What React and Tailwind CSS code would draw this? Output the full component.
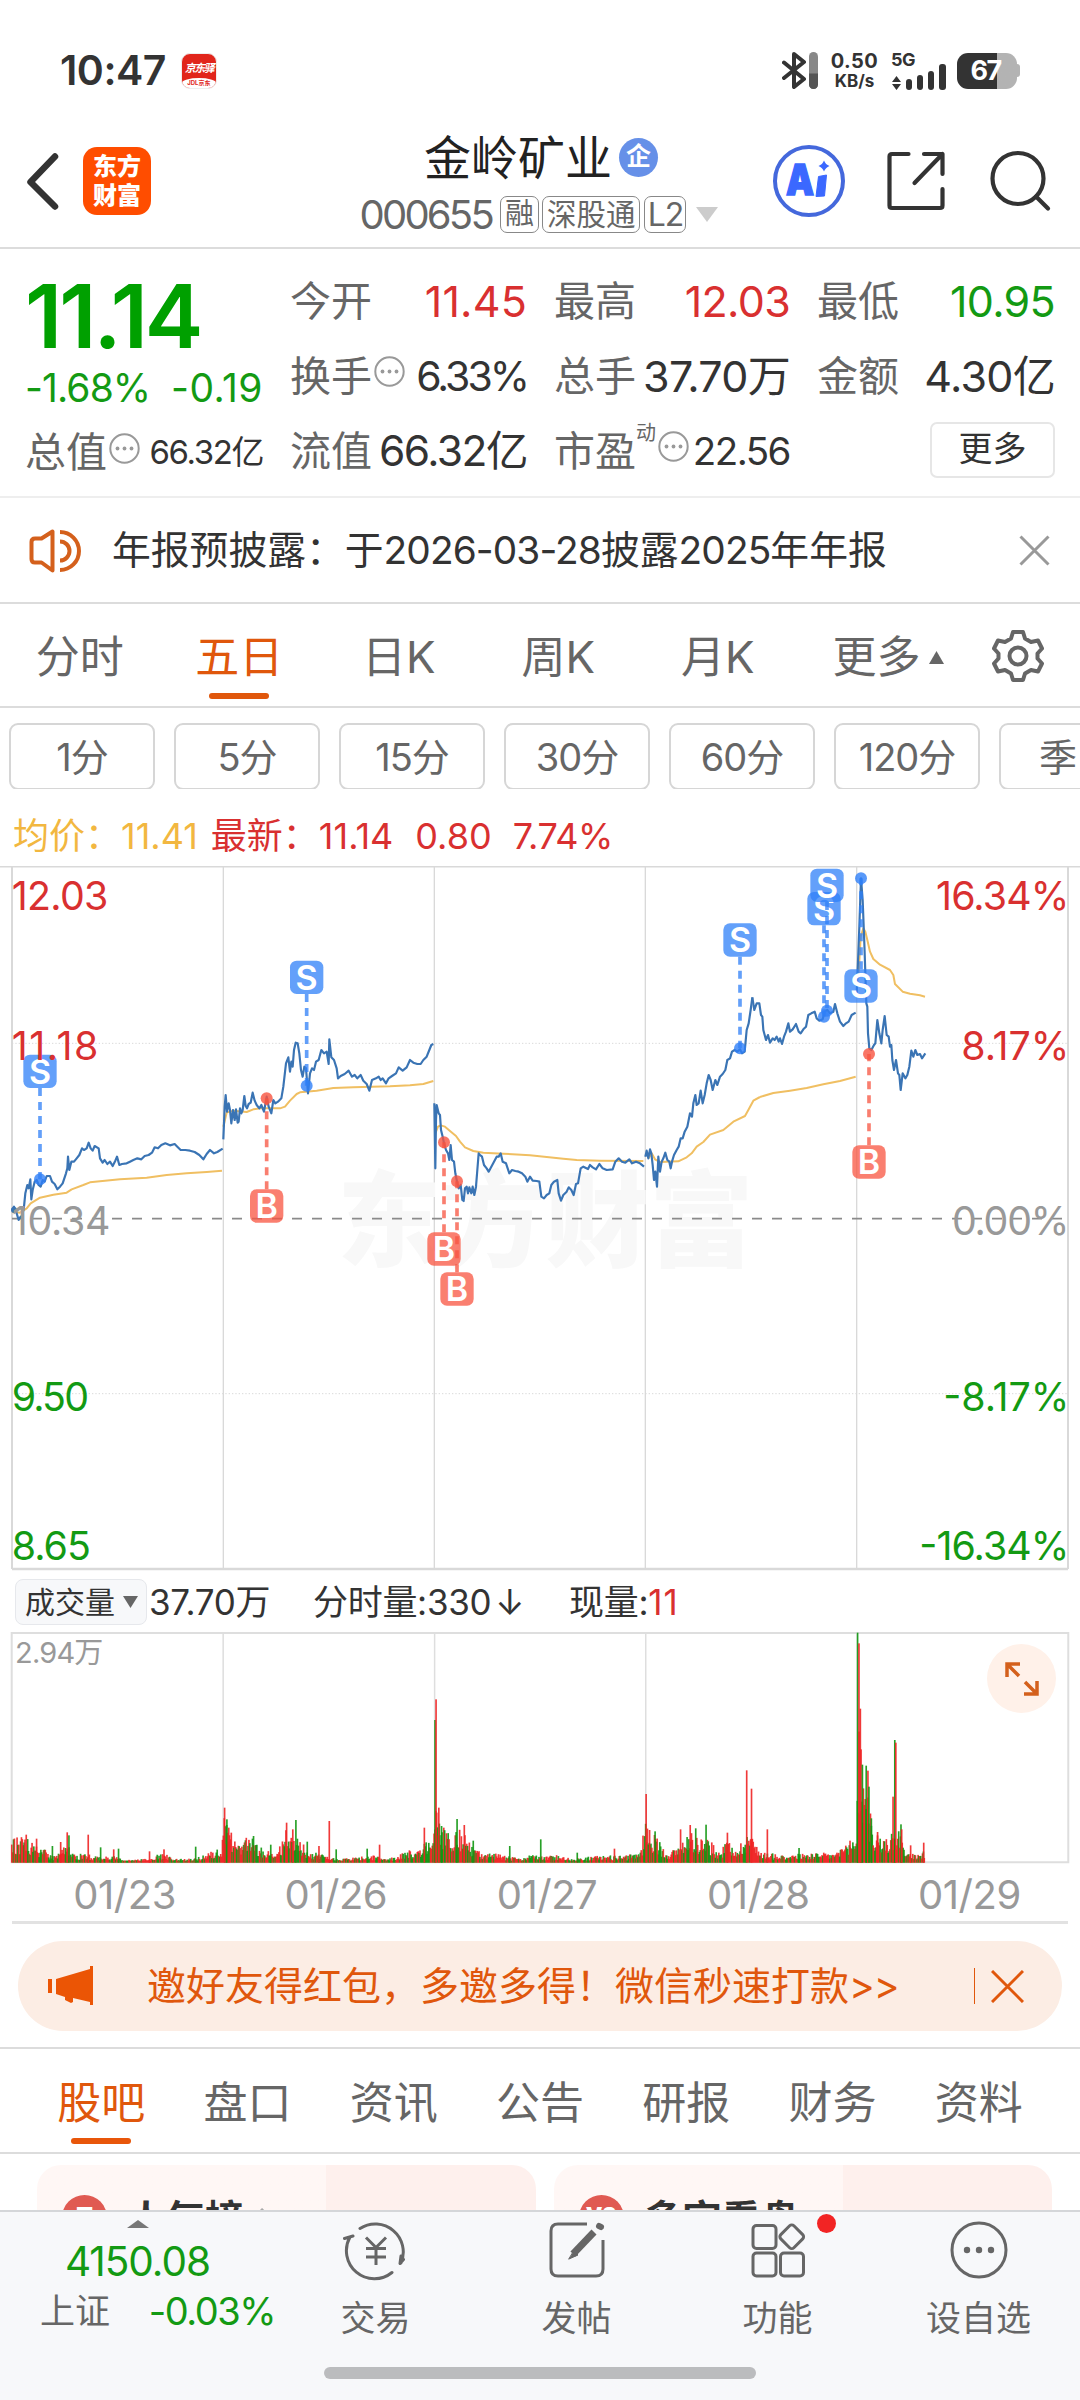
import React, { useState } from 'react';

const FONT = "font-['Inter','Noto_Sans_CJK_SC',sans-serif]";

const PERIODS = ['分时', '五日', '日K', '周K', '月K'];
const MINUTES = ['1分', '5分', '15分', '30分', '60分', '120分'];
const SECTIONS = ['股吧', '盘口', '资讯', '公告', '研报', '财务', '资料'];
const DATES = ['01/23', '01/26', '01/27', '01/28', '01/29'];

// Intraday lines, three units to a pixel; every segment has its own origin
const SEGMENTS = [
  {
    at: [0, 0],
    price: '36,1050 42,1040 50,1060 56,1080 62,1070 66,1072 72,1040 76,1000 82,975 86,985 91,958 94,1018 98,990 104,965 110,960 116,975 122,980 128,960 134,965 140,948 150,948 156,965 164,972 172,988 180,980 188,970 198,940 202,925 204,890 208,930 214,905 222,905 230,895 238,885 246,865 252,870 260,865 266,848 272,865 278,872 284,858 296,865 300,895 308,908 314,900 322,912 330,905 338,918 346,902 351,890 358,915 366,912 380,910 390,905 400,900 412,895 424,898 434,888 446,885 456,878 464,862 474,865 484,855 496,850 510,856 524,852 532,860 542,870 556,870 570,872 584,876 598,885 610,898 620,882 630,870 642,880 652,876 668,866',
    avg: '36,1055 60,1058 80,1045 92,1030 120,1013 160,1004 200,998 215,988 250,975 270,967 300,964 360,958 440,953 500,945 560,940 620,936 666,932',
  },
  {
    at: [0, 0],
    price: '670,838 674,740 677,705 681,755 686,730 690,750 694,790 699,750 704,780 708,748 713,788 716,785 720,745 724,760 728,750 733,708 737,738 741,745 746,732 752,728 758,698 764,722 770,735 778,745 784,735 792,755 800,710 806,740 814,760 820,720 826,730 834,725 844,715 850,680 858,610 865,592 870,635 874,605 878,620 882,570 887,548 893,550 898,580 903,630 908,650 913,620 918,625 924,700 930,640 936,625 942,630 948,605 956,600 964,570 972,580 980,575 986,612 988,538 994,592 1002,600 1010,625 1014,655 1022,648 1034,642 1046,632 1056,650 1064,645 1072,655 1082,645 1090,662 1100,672 1108,692 1116,660 1128,655 1136,650 1142,660 1148,655 1158,670 1166,655 1176,648 1188,640 1196,622 1208,632 1220,622 1230,600 1240,608 1252,612 1262,612 1270,600 1280,590 1288,570 1294,555 1300,552',
    avg: '670,800 680,758 700,752 740,756 760,748 780,745 840,745 855,740 870,722 890,702 900,697 950,692 1000,684 1060,682 1170,679 1230,676 1270,672 1300,663',
  },
  {
    at: [1290, 360],
    price: '13,370 16,565 18,420 20,375 26,400 30,405 33,450 38,470 42,490 48,510 54,520 58,540 62,495 66,540 72,545 76,580 82,610 86,625 92,615 97,660 101,663 105,625 110,620 114,640 118,622 124,640 128,620 133,645 138,620 142,570 146,520 150,525 156,530 162,555 170,565 176,575 184,560 192,545 200,530 206,530 212,520 218,545 228,550 238,580 246,570 256,573 266,575 276,580 286,590 292,605 300,590 308,602 320,603 328,605 334,650 342,655 350,645 358,640 364,615 372,605 382,600 386,640 393,662 400,645 410,635 416,622 424,630 431,645 438,612 444,610 452,565 460,560 474,567 480,555 488,562 498,568 508,552 518,565 530,570 548,568 556,545 566,535 576,545 586,548 598,538 606,550 618,545 630,550 642,560',
    avg: '16,460 24,440 32,436 45,440 60,453 78,468 90,485 105,502 130,513 160,518 220,521 300,526 350,531 400,536 440,540 510,542 640,543',
  },
  {
    at: [1290, 360],
    price: '646,530 650,512 655,535 660,508 664,520 668,555 672,600 676,575 681,620 685,530 690,575 695,545 700,535 706,518 712,540 718,545 722,565 726,545 732,525 740,510 746,500 752,475 758,475 764,455 772,440 780,400 786,410 790,370 796,345 800,375 806,370 812,332 818,370 824,345 830,310 836,285 842,300 848,330 856,300 862,315 870,290 878,282 886,270 892,240 900,235 906,215 914,210 922,215 930,208 936,220 944,215 950,150 956,130 962,90 967,52',
    avg: '655,535 665,520 675,538 690,546 745,544 770,532 785,520 800,500 820,486 840,464 880,450 910,425 945,408 955,390 970,362 990,351',
  },
  {
    at: [2220, 0],
    price: '37,412 43,450 50,430 58,430 63,465 67,470 70,510 78,540 84,525 90,548 98,535 104,540 110,530 116,545 120,535 126,552 132,530 138,515 145,490 150,515 158,508 168,492 176,515 182,520 190,508 198,500 205,465 214,460 224,455 230,475 238,482 248,478 254,455 262,450 270,460 280,455 285,432 292,460 300,485 310,498 318,490 326,485 335,465 347,458',
    avg: '60,711 100,699 150,692 200,684 250,673 300,663 347,650',
  },
  {
    at: [2220, 0],
    price: '350,400 353,330 358,200 363,55 368,120 373,250 379,430 382,440 384,520 388,565 394,570 402,555 406,550 412,480 418,520 424,550 428,510 434,468 440,525 446,530 450,560 454,555 457,600 462,630 468,600 474,640 478,645 482,690 488,640 496,655 502,645 508,620 514,572 520,590 526,570 532,585 540,582 546,595 556,580',
    avg: '356,340 362,230 370,205 376,215 382,240 390,275 400,297 420,314 450,330 460,345 465,372 488,395 510,401 540,406 555,410',
  },
];

// x, y of the deal on the line, y of its badge
const DEALS = [
  { side: 'S', x: 120, y: 958, box: 634 },
  { side: 'S', x: 920, y: 677, box: 352 },
  { side: 'B', x: 800, y: 715, box: 1038 },
  { side: 'B', x: 1332, y: 847, box: 1167 },
  { side: 'B', x: 1371, y: 964, box: 1287 },
  { side: 'S', x: 2220, y: 565, box: 240 },
  { side: 'S', x: 2472, y: 470, box: 146 },
  { side: 'S', x: 2481, y: 452, box: 76 },
  { side: 'S', x: 2583, y: 55, box: 378 },
  { side: 'B', x: 2607, y: 582, box: 906 },
];

// [x, height] pairs the ordinary volume bars stay under
const ENVELOPE = [
  [17, 75], [40, 80], [60, 50], [80, 20], [97, 55], [110, 25], [128, 30], [135, 20], [150, 18], [165, 20], [180, 8], [200, 10],
  [217, 20], [238, 30], [250, 12], [270, 12], [285, 15], [300, 28], [322, 50], [326, 150], [335, 100], [345, 50], [358, 80], [370, 70],
  [385, 30], [393, 40], [400, 25], [412, 90], [418, 105], [427, 80], [440, 60], [450, 30], [465, 30], [480, 15], [500, 12], [520, 18],
  [540, 22], [560, 14], [580, 25], [595, 40], [605, 30], [616, 80], [628, 70], [634, 180], [645, 100], [655, 90], [664, 110], [674, 90],
  [685, 50], [700, 30], [720, 30], [750, 14], [770, 25], [790, 18], [810, 25], [830, 12], [870, 22], [910, 22], [930, 35],
  [938, 150], [943, 100], [955, 75], [970, 30], [985, 50], [1003, 105], [1012, 80], [1028, 75], [1045, 30], [1058, 80], [1070, 40],
  [1085, 100], [1092, 90], [1100, 40], [1120, 30], [1140, 25], [1180, 30], [1210, 30], [1235, 60], [1243, 110], [1247, 430], [1251, 290],
  [1258, 250], [1265, 130], [1275, 80], [1285, 70], [1296, 100], [1308, 100], [1313, 30], [1330, 25], [1341, 40],
];
const SPIKES = [
  [38, 84, 'r'], [53, 72, 'r'], [76, 50, 'g'], [88, 62, 'r'], [97.5, 91, 'r'], [100, 82, 'g'], [128, 84, 'r'], [146, 46, 'g'], [165, 40, 'r'],
  [172, 42, 'g'], [217, 34, 'r'], [238, 40, 'r'], [284, 48, 'g'], [326, 165, 'r'], [329, 113, 'g'], [332, 105, 'r'], [368, 80, 'g'],
  [393, 54, 'g'], [416, 120, 'r'], [425, 100, 'r'], [429.5, 128, 'g'], [446, 63, 'g'], [463, 50, 'r'], [478, 125, 'r'], [488, 40, 'g'],
  [533, 42, 'g'], [551, 54, 'r'], [616, 105, 'r'], [631.5, 428, 'g'], [633, 490, 'r'], [637, 165, 'r'], [641, 110, 'g'], [663.5, 131, 'g'],
  [674, 113, 'r'], [687, 66, 'g'], [740, 50, 'g'], [785, 70, 'g'], [838, 30, 'g'], [892, 42, 'r'], [938, 206, 'r'], [943, 98, 'r'],
  [951, 94, 'g'], [988, 100, 'r'], [1002, 113, 'r'], [1010, 103, 'g'], [1025, 114, 'g'], [1056, 90, 'r'], [1084, 277, 'r'],
  [1091, 222, 'r'], [1114, 100, 'r'], [1160, 44, 'g'], [1234, 66, 'r'], [1245, 690, 'g'], [1247, 658, 'r'], [1249, 462, 'r'],
  [1250, 340, 'r'], [1252, 294, 'g'], [1257.5, 291, 'g'], [1260, 276, 'r'], [1261.5, 228, 'g'], [1265, 133, 'g'], [1274, 92, 'r'],
  [1296.5, 198, 'r'], [1299, 368, 'g'], [1300.5, 360, 'r'], [1308, 115, 'g'], [1309, 100, 'r'], [1322, 52, 'r'], [1341, 60, 'r'],
];

function buildBars() {
  let seed = 20260129;
  const rand = () => {
    seed = (seed * 1103515245 + 12345) % 2147483648;
    return seed / 2147483648;
  };
  const bars = [];
  let k = 0;
  for (let x = 17; x < 1343; x += 1.28) {
    while (k < ENVELOPE.length - 2 && ENVELOPE[k + 1][0] < x) k++;
    const [x0, h0] = ENVELOPE[k];
    const [x1, h1] = ENVELOPE[k + 1];
    const t = Math.min(1, Math.max(0, (x - x0) / (x1 - x0)));
    const h = (h0 + (h1 - h0) * t) * (0.3 + 0.7 * rand());
    bars.push([x, Math.max(6, h), rand() > 0.42 ? 'r' : 'g']);
  }
  return [...bars, ...SPIKES];
}
const BARS = buildBars();

function Info() {
  return (
    <svg className="ml-[2px] -mt-[9px] w-[31px] h-[31px] shrink-0" viewBox="0 0 31 31" fill="none" stroke="#999">
      <circle cx="15.5" cy="15.5" r="14.2" strokeWidth="2" />
      <g fill="#999" stroke="none">
        <circle cx="8.5" cy="15.5" r="1.9" />
        <circle cx="15.5" cy="15.5" r="1.9" />
        <circle cx="22.5" cy="15.5" r="1.9" />
      </g>
    </svg>
  );
}

function StatusBar() {
  return (
    <div className="h-[120px] pt-[22px] flex items-center pl-[60px] pr-[60px] text-[#333]">
      <span className="text-[41px] leading-none font-semibold tracking-[-0.5px]">10:47</span>
      <div className="ml-[15px] w-[36px] h-[36px] rounded-[9px] bg-[#e1251b] overflow-hidden border border-[#eee] flex flex-col items-center justify-between">
        <span className="mt-[9px] text-[11px] leading-none font-bold italic text-white whitespace-nowrap tracking-[-1.500px]">京东驿</span>
        <span className="w-full h-[10px] bg-white rounded-t-[50%] text-[6px] leading-[10px] font-bold text-center text-[#e1251b]">JDL京东</span>
      </div>
      <div className="ml-auto flex items-center">
        <svg className="w-[36px] h-[37px]" viewBox="0 0 36 37" fill="none" stroke="#333" strokeWidth="4" strokeLinecap="round" strokeLinejoin="round">
          <path d="M2 10.500 22 27 12 35V2L22 10 2 26" />
          <rect x="27" y="0" width="9" height="37" rx="4.500" fill="#888" stroke="none" />
          <path d="M27 21.500h9v11a4.500 4.500 0 0 1-9 0z" fill="#555" stroke="none" />
        </svg>
        <div className="ml-[11px] w-[51px] flex flex-col items-center font-bold">
          <span className="text-[20px] leading-[20px] tracking-[0.500px]">0.50</span>
          <span className="text-[17px] leading-[20px]">KB/s</span>
        </div>
        <div className="ml-[11px] w-[56px] flex flex-col">
          <span className="text-[18px] leading-[16px] font-bold -mb-[4px] tracking-[-0.5px]">5G</span>
          <svg className="w-[56px] h-[26px]" viewBox="0 0 56 26" fill="#333">
            <path d="M5.500 12 10 18H1zM5.500 26 10 20H1z" />
            <rect x="15" y="15" width="6" height="11" rx="3" />
            <rect x="26" y="11" width="6" height="15" rx="3" />
            <rect x="37" y="7" width="6" height="19" rx="3" />
            <rect x="48" y="0" width="7" height="26" rx="3" />
          </svg>
        </div>
        <div className="ml-[10px] flex items-center">
          <div className="w-[60px] h-[36px] rounded-[11px] bg-linear-to-r from-[#333] from-66% to-[#b3b3b3] to-66% flex items-center justify-center">
            <span className="text-white font-bold text-[27px] leading-none tracking-[-1.500px] mr-[3px]">67</span>
          </div>
          <div className="w-[3px] h-[13px] bg-[#b3b3b3] rounded-r-sm" />
        </div>
      </div>
    </div>
  );
}

function Header() {
  return (
    <div className="h-[129px] border-b-2 border-[#dcdcdc] flex items-center pb-[5px]">
      <svg className="ml-[25px] w-[36px] h-[60px] shrink-0" viewBox="0 0 36 60" fill="none" stroke="#333" strokeWidth="6.500" strokeLinecap="round" strokeLinejoin="round">
        <path d="M30 5.500 5.500 31 30 55.500" />
      </svg>
      <div className="ml-[22px] w-[68px] h-[68px] shrink-0 rounded-[14px] bg-[#ff4d00] text-white text-[24px] leading-[29px] font-black flex flex-col items-center justify-center">
        <span>东方</span>
        <span>财富</span>
      </div>
      <div className="ml-[206px] w-[364px] pt-[8px] shrink-0 flex flex-col items-center">
        <div className="flex items-center h-[60px] ml-[4px]">
          <span className="text-[47px] leading-none text-[#222]">金岭矿业</span>
          <span className="ml-[7px] w-[39px] h-[39px] rounded-full bg-[#6690e8] text-white text-[25px] leading-[37px] font-bold text-center">企</span>
        </div>
        <div className="flex items-center h-[54px] text-[#666] whitespace-nowrap">
          <span className="text-[40px] leading-none tracking-[-2.800px]">000655</span>
          <span className="ml-[8px] h-[37px] px-[4px] border border-[#888] rounded-[7px] text-[29px] leading-[34px]">融</span>
          <span className="ml-[3px] h-[37px] px-[4px] border border-[#888] rounded-[7px] text-[29.500px] leading-[34px]">深股通</span>
          <span className="ml-[4px] w-[42px] text-center h-[37px] border border-[#888] rounded-[7px] text-[32px] leading-[36px] tracking-[-1px]">L2</span>
          <svg className="ml-[10px] w-[22px] h-[15px]" viewBox="0 0 22 15" fill="#ccc">
            <path d="M0 0h22L11 15z" />
          </svg>
        </div>
      </div>
      <svg className="ml-[51px] w-[74px] h-[74px] shrink-0" viewBox="0 0 74 74">
        <circle cx="37" cy="37" r="34" fill="none" stroke="#4468dc" strokeWidth="4" />
        <text x="14" y="51" fontSize="42" fontWeight="900" fill="#3b68ff" stroke="#3b68ff" strokeWidth="1.500" textLength="28" lengthAdjust="spacingAndGlyphs">A</text>
        <path d="M46.500 32.500 54.500 31 52.500 52 44 52.500z" fill="#3b68ff" stroke="#3b68ff" strokeLinejoin="round" />
        <path d="M52 16.500q1.500 4 5.500 5.500-4 1.500-5.500 5.500-1.500-4-5.500-5.500 4-1.500 5.500-5.500z" fill="#3b68ff" />
      </svg>
      <svg className="ml-[40px] w-[62px] h-[62px] shrink-0" viewBox="0 0 62 62" fill="none" stroke="#333" strokeWidth="4.200" strokeLinecap="round" strokeLinejoin="round">
        <path d="M22.500 4H6Q3.500 4 3.500 6.500V55.500Q3.500 58 6 58H54Q56.500 58 56.500 55.500V39M38 4H56.500V24M56.500 4 28.500 33" />
      </svg>
      <svg className="ml-[41px] w-[62px] h-[62px] shrink-0" viewBox="0 0 62 62" fill="none" stroke="#333" strokeWidth="4.200" strokeLinecap="round">
        <circle cx="29" cy="28.500" r="25.500" />
        <path d="M47 46.500 59 58.500" />
      </svg>
    </div>
  );
}

function Stat({ label, value, color = 'text-[#333]', size = 'text-[43px] tracking-[-0.700px]', info, sup }) {
  return (
    <div className="flex items-center justify-between h-[75px]">
      <span className="flex items-center text-[41px] leading-none text-[#666] whitespace-nowrap">
        {label}
        {sup && <span className="text-[20px] self-start -mt-[8px]">{sup}</span>}
        {info && <Info />}
      </span>
      <span className={`leading-none whitespace-nowrap ${size} ${color}`}>{value}</span>
    </div>
  );
}

function Quote() {
  return (
    <div className="h-[249px] border-b-2 border-[#eee] pl-[25px] pt-[15px] grid grid-cols-[238px_237px_236px_238px] gap-x-[27px]">
      <div>
        <div className="h-[93px] pt-[7px] text-[88px] leading-[90px] font-semibold text-[#00a000] tracking-[-3px]">11.14</div>
        <div className="h-[62px] flex items-center justify-between text-[39px] leading-none text-[#139a13] tracking-[-0.900px]">
          <span>-1.68%</span>
          <span className="tracking-[0.500px]">-0.19</span>
        </div>
        <div className="h-[68px] flex items-center justify-between">
          <span className="flex items-center text-[41px] leading-none text-[#666]">总值<Info /></span>
          <span className="text-[33px] leading-none text-[#333] tracking-[-1.400px]">66.32亿</span>
        </div>
      </div>
      <div>
        <Stat label="今开" value="11.45" color="text-[#d93030]" size="text-[43px] tracking-[0.200px]" />
        <Stat label="换手" value="6.33%" size="text-[41px] tracking-[-3px]" info />
        <Stat label="流值" value="66.32亿" size="text-[42.500px] tracking-[-1.500px]" />
      </div>
      <div>
        <Stat label="最高" value="12.03" color="text-[#d93030]" />
        <Stat label="总手" value="37.70万" />
        <Stat label="市盈" value="22.56" size="text-[38.500px] tracking-[-1.500px]" sup="动" info />
      </div>
      <div>
        <Stat label="最低" value="10.95" color="text-[#139a13]" />
        <Stat label="金额" value="4.30亿" />
        <div className="h-[73px] flex items-center justify-end">
          <button className="w-[125px] h-[56px] border-2 border-[#e6e6e6] rounded-[7px] text-[34px] leading-none text-[#333] pb-[2px]">更多</button>
        </div>
      </div>
    </div>
  );
}

function Notice({ onClose }) {
  return (
    <div className="h-[106px] border-b-2 border-[#dcdcdc] flex items-center pt-[2px] pl-[28px] pr-[30px]">
      <svg className="w-[54px] h-[46px] shrink-0" viewBox="0 0 54 46" fill="none" stroke="#d4601c" strokeWidth="4" strokeLinejoin="round">
        <path d="M24.500 3.500V42.500L13.500 34.500H7Q3.500 34.500 3.500 31V14Q3.500 10.500 7 10.500H13.500z" />
        <path d="M32 4a19 19 0 0 1 0 38M32 13.500a9.500 9.500 0 0 1 0 19" />
      </svg>
      <span className="ml-[30px] text-[38.800px] leading-none text-[#333] whitespace-nowrap">
        年报预披露：于<span className="tracking-[-0.900px]">2026-03-28</span>披露<span className="tracking-[-0.900px]">2025</span>年年报
      </span>
      <svg onClick={onClose} className="ml-auto w-[31px] h-[31px]" viewBox="0 0 31 31" stroke="#999" strokeWidth="3">
        <path d="M1.500 1.500l28 28M29.500 1.500l-28 28" />
      </svg>
    </div>
  );
}

function PeriodTabs({ period, onSelect }) {
  return (
    <div className="h-[104px] border-b-2 border-[#dcdcdc] flex text-[44px] leading-none text-[#666]">
      {PERIODS.map((name) => (
        <button
          key={name}
          onClick={() => onSelect(name)}
          className={`w-[159.500px] h-full pt-[31px] flex flex-col items-center leading-none ${name === period ? 'text-[#e0570c]' : ''}`}
        >
          {name}
          {name === period && <span className="mt-[14px] w-[60px] h-[6px] rounded-full bg-[#e0570c]" />}
        </button>
      ))}
      <button className="ml-[35px] pt-[31px] flex items-start leading-none">
        更多
        <svg className="ml-[8px] mt-[16px] w-[15px] h-[13px]" viewBox="0 0 15 13" fill="#666">
          <path d="M7.500 0 15 13H0z" />
        </svg>
      </button>
      <svg className="ml-[48px] mt-[25px] w-[52px] h-[54px]" viewBox="0 0 52 54" fill="none" stroke="#666" strokeWidth="4" strokeLinejoin="round">
        <path d="M21 3H31L33 9.500 39 13 46 11.500 50 19.500 45.500 24.500V29.500L50 34.500 46 42.500 39 41 33 44.500 31 51H21L19 44.500 13 41 6 42.500 2 34.500 6.500 29.500V24.500L2 19.500 6 11.500 13 13 19 9.500z" />
        <circle cx="26" cy="27" r="8.500" />
      </svg>
    </div>
  );
}

function PriceChart() {
  return (
    <svg className="block w-full h-[706px]" viewBox="0 18 3240 2118" fontSize="118">
      <g stroke="#d9d9d9" fill="none">
        <path d="M0 20H3240" strokeWidth="5" />
        <path d="M36 20V2127M3204 20V2127" strokeWidth="6" />
        <path d="M670 20V2127M1303 20V2127M1936 20V2127M2570 20V2127" strokeWidth="4" />
        <path d="M36 2127H3204" strokeWidth="7" />
        <path d="M36 550H3204M36 1601H3204" strokeWidth="3" strokeDasharray="4 6" />
      </g>
      <text x="1012" y="1198" fontSize="312" fontWeight="900" fill="#f8f8f8" textLength="1248">东方财富</text>
      <path d="M36 1076H3204" stroke="#8a8a8a" strokeWidth="5" strokeDasharray="30 30" />
      {SEGMENTS.map(({ at, price, avg }, i) => (
        <g key={i} transform={`translate(${at[0]} ${at[1]})`} fill="none" strokeLinejoin="round">
          <polyline points={avg} stroke="#f0bf62" strokeWidth="6" />
          <polyline points={price} stroke="#3a74b4" strokeWidth="6.500" />
        </g>
      ))}
      <circle cx="42" cy="1050" r="9" fill="#3a74b4" />
      {DEALS.map(({ side, x, y, box }) => {
        const color = side === 'S' ? '#2f80f8' : '#f85440';
        return (
          <g key={`${x}-${box}`}>
            <path d={`M${x} ${box > y ? box - 50 : box + 50}V${y}`} stroke={color} strokeWidth="11" strokeDasharray="24 18" opacity="0.750" />
            <circle cx={x} cy={y} r="18" fill={color} opacity="0.800" />
            <rect x={x - 50} y={box - 50} width="100" height="100" rx="20" fill={color} opacity="0.750" />
            <text x={x} y={box + 37} textAnchor="middle" fontSize="102" fontWeight="600" fill="#fff">{side}</text>
          </g>
        );
      })}
      <g fill="#d93030">
        <text x="35" y="151" textLength="290">12.03</text>
        <text x="35" y="599" textLength="260">11.18</text>
        <text x="2808" y="151" textLength="400">16.34%</text>
        <text x="2884" y="599" textLength="324">8.17%</text>
      </g>
      <g fill="#999">
        <text x="35" y="1126" textLength="296">10.34</text>
        <text x="2856" y="1126" textLength="352">0.00%</text>
      </g>
      <g fill="#139a13">
        <text x="35" y="1654" textLength="232">9.50</text>
        <text x="35" y="2100" textLength="238">8.65</text>
        <text x="2830" y="1654" textLength="378">-8.17%</text>
        <text x="2758" y="2100" textLength="450">-16.34%</text>
      </g>
    </svg>
  );
}

function VolumeChart() {
  return (
    <div className="relative">
      <svg className="block w-full h-[232px]" viewBox="0 0 1568 696" preserveAspectRatio="none">
        <g stroke="#dedede" fill="none">
          <path d="M17 3H1551V691H17z" vectorEffect="non-scaling-stroke" strokeWidth="2" />
          <path d="M324 3V691M631 3V691M937.500 3V691M1244.500 3V691" vectorEffect="non-scaling-stroke" strokeWidth="1.500" />
        </g>
        {BARS.map(([x, h, side], i) => (
          <rect key={i} x={x - 1.1} y={692 - h} width="2.400" height={h} fill={side === 'r' ? '#ee2424' : '#109610'} opacity="0.900" />
        ))}
      </svg>
      <span className="absolute left-[15px] top-[6px] text-[29px] leading-none text-[#999] tracking-[-0.800px]">2.94万</span>
      <button className="absolute right-[24px] top-[12px] w-[69px] h-[69px] rounded-full bg-[#fff1e9] flex items-center justify-center">
        <svg className="w-[34px] h-[34px]" viewBox="0 0 34 34" fill="none" stroke="#d4601c" strokeWidth="3.500">
          <path d="M2 15V2H15M2 2 14 14M32 19V32H19M32 32 20 20" />
        </svg>
      </button>
    </div>
  );
}

function Chart() {
  return (
    <div>
      <div className="h-[60px] mt-[17px] pl-[13px] flex items-center text-[36px] leading-none whitespace-pre">
        <span className="text-[#f2b740]">均价：11.41</span>
        <span className="ml-[13px] text-[#d93030]">最新：11.14</span>
        <span className="ml-[22px] text-[#d93030]">0.80</span>
        <span className="ml-[21px] text-[#d93030] tracking-[-0.500px]">7.74%</span>
      </div>
      <PriceChart />
      <div className="h-[60px] flex items-center pl-[15px] text-[35px] leading-none text-[#333] tracking-[-0.300px] whitespace-nowrap">
        <button className="w-[132px] h-[46px] rounded-[8px] border border-[#e6e8ec] bg-[#f7f8fa] flex items-center pl-[9px] text-[30px] leading-none tracking-normal">
          成交量
          <svg className="ml-[8px] w-[15px] h-[12px]" viewBox="0 0 15 12" fill="#666">
            <path d="M0 0h15L7.500 12z" />
          </svg>
        </button>
        <span className="ml-[2px] w-[164px]">37.70万</span>
        <span className="w-[256px]">分时量:330<span className="ml-[4px]">↓</span></span>
        <span>现量:<span className="text-[#d93030] tracking-[1px]">11</span></span>
      </div>
      <VolumeChart />
      <div className="mx-[12px] h-[60px] border-b-[3px] border-[#e2e2e2] grid grid-cols-5 text-center text-[40px] leading-[61px] text-[#999] tracking-[-0.500px]">
        {DATES.map((d) => <span key={d} className="pl-[14px]">{d}</span>)}
      </div>
    </div>
  );
}

function Banner({ onClose }) {
  return (
    <div className="mx-[18px] mt-[17px] h-[90px] rounded-full bg-[#fcede4] flex items-center pl-[29px] pr-[38px] text-[#e0570c]">
      <svg className="w-[47px] h-[40px]" viewBox="0 0 47 40" fill="#eb5505">
        <path d="M1 13H5V27H1zM9 13 43 3V0H46V39H43V36L26 32V36L24 37 18 34V31L9 28z" />
      </svg>
      <span className="ml-[53px] text-[39px] leading-none whitespace-nowrap pb-[2px]">邀好友得红包，多邀多得！微信秒速打款<span className="tracking-[-1px]">&gt;&gt;</span></span>
      <span className="ml-auto w-[1.500px] h-[36px] bg-[#e0570c]" />
      <svg onClick={onClose} className="ml-[16px] w-[33px] h-[33px]" viewBox="0 0 33 33" stroke="#e0570c" strokeWidth="3">
        <path d="M1 1l31 31M32 1 1 32" />
      </svg>
    </div>
  );
}

function SectionTabs({ section, onSelect }) {
  return (
    <div className="mt-[16px] h-[107px] border-y-2 border-[#dcdcdc] px-[28px] grid grid-cols-7 text-[44px] leading-none text-[#666]">
      {SECTIONS.map((name) => (
        <button
          key={name}
          onClick={() => onSelect(name)}
          className={`pt-[32px] flex flex-col items-center leading-none ${name === section ? 'text-[#e0570c]' : ''}`}
        >
          {name}
          {name === section && <span className="mt-[13px] w-[60px] h-[6px] rounded-full bg-[#e8560a]" />}
        </button>
      ))}
    </div>
  );
}

function Card({ title, mark, arrow }) {
  return (
    <div className="h-[120px] rounded-[24px] bg-linear-to-r from-[#fff7f5] from-58% to-[#fef0ed] to-58% pt-[30px] pl-[25px] flex items-start">
      <span className="w-[45px] h-[45px] shrink-0 rounded-full bg-[#e05a52] text-white text-[21px] leading-[42px] font-black text-center">{mark}</span>
      <span className="ml-[20px] text-[39px] leading-[48px] font-bold text-[#333]">{title}</span>
      {arrow && (
        <svg className="ml-[16px] mt-[13px] w-[12px] h-[20px]" viewBox="0 0 12 20" fill="none" stroke="#aaa" strokeWidth="3">
          <path d="M1 1l9 9-9 9" />
        </svg>
      )}
    </div>
  );
}

function NavItem({ label, badge, children }) {
  return (
    <button className="relative w-[201px] pt-[8px] flex flex-col items-center">
      <svg className="w-[66px] h-[62px]" viewBox="0 0 66 62" fill="none" stroke="#666" strokeWidth="3" strokeLinecap="round" strokeLinejoin="round">
        {children}
      </svg>
      <span className="mt-[19px] text-[35px] leading-none text-[#666]">{label}</span>
      {badge && <span className="absolute left-[140px] top-[2px] w-[19px] h-[19px] rounded-full bg-[#f22424]" />}
    </button>
  );
}

function BottomBar() {
  return (
    <div className="h-[190px] border-t-2 border-[#d4d6d9] bg-[#f7f8fa] flex flex-col">
      <div className="flex h-[155px]">
        <div className="w-[275px] shrink-0 pt-[8px] flex flex-col items-center">
          <svg className="w-[22px] h-[8px]" viewBox="0 0 22 8" fill="#777">
            <path d="M11 0 22 8H0z" />
          </svg>
          <span className="mt-[11px] text-[40.500px] leading-[46px] text-[#139a13] tracking-[-1px]">4150.08</span>
          <div className="mt-[4px] w-full pl-[40px] flex items-center justify-between leading-[44px]">
            <span className="text-[35px] text-[#666]">上证</span>
            <span className="text-[38px] text-[#139a13] tracking-[-1.500px]">-0.03%</span>
          </div>
        </div>
        <NavItem label="交易">
          <path d="M17 8.500A28 28 0 0 1 58 43M60.500 39.500 57 43.500 58 36M49 52.500A28 28 0 0 1 7 17M1.500 18.500 10 16" />
          <path d="M23 17.500 33 27.500 43 17.500M33 27.500V45M23 28.500H43M23 37H43" strokeLinecap="butt" />
        </NavItem>
        <NavItem label="发帖">
          <path d="M43 4H14Q7 4 7 11V49Q7 56 14 56H52Q59 56 59 49V20" strokeLinecap="butt" />
          <path d="M50 12 29 34" strokeWidth="7" strokeLinecap="butt" />
          <path d="M30 31 34 35 25 39z" fill="#666" strokeWidth="1" />
          <path d="M55 6 57 7" strokeWidth="6" />
        </NavItem>
        <NavItem label="功能" badge>
          <rect x="8" y="5.500" width="23" height="23" rx="3.500" />
          <rect x="8" y="33" width="23" height="23" rx="3.500" />
          <rect x="35.500" y="33" width="23" height="23" rx="3.500" />
          <rect x="37.500" y="7.500" width="18.500" height="18.500" rx="3" transform="rotate(45 46.750 16.750)" />
        </NavItem>
        <NavItem label="设自选">
          <circle cx="33" cy="30" r="27" />
          <g fill="#666" stroke="none">
            <circle cx="21" cy="30" r="3.200" />
            <circle cx="33" cy="30" r="3.200" />
            <circle cx="45" cy="30" r="3.200" />
          </g>
        </NavItem>
      </div>
      <div className="mx-auto w-[432px] h-[12px] rounded-full bg-[#bbbcbe]" />
    </div>
  );
}

export default function App() {
  const [period, setPeriod] = useState('五日');
  const [section, setSection] = useState('股吧');

  return (
    <div className={`w-[1080px] h-[2400px] overflow-hidden bg-white flex flex-col ${FONT}`}>
      <StatusBar />
      <Header />
      <Quote />
      <Notice />
      <PeriodTabs period={period} onSelect={setPeriod} />
      {/* Minute periods, scrolled off at the right edge */}
      <div className="h-[82px] pt-[15px] pl-[9px] flex gap-[19px] overflow-hidden text-[38px] leading-none text-[#666]">
        {MINUTES.map((m) => (
          <button key={m} className="w-[146px] h-[67px] shrink-0 border-2 border-[#d6d6d6] rounded-[9px] pt-[2px] tracking-[-1px]">{m}</button>
        ))}
        <button className="w-[146px] h-[67px] shrink-0 border-2 border-[#d6d6d6] rounded-[9px] pt-[2px] pl-[38px] text-left">季</button>
      </div>
      <Chart />
      <Banner />
      <SectionTabs section={section} onSelect={setSection} />
      <div className="h-[56px] pt-[11px] pl-[37px] pr-[28px] grid grid-cols-2 gap-[18px] overflow-hidden">
        <Card title="人气榜" mark="■" arrow />
        <Card title="多空看盘" mark="VS" />
      </div>
      <BottomBar />
    </div>
  );
}
